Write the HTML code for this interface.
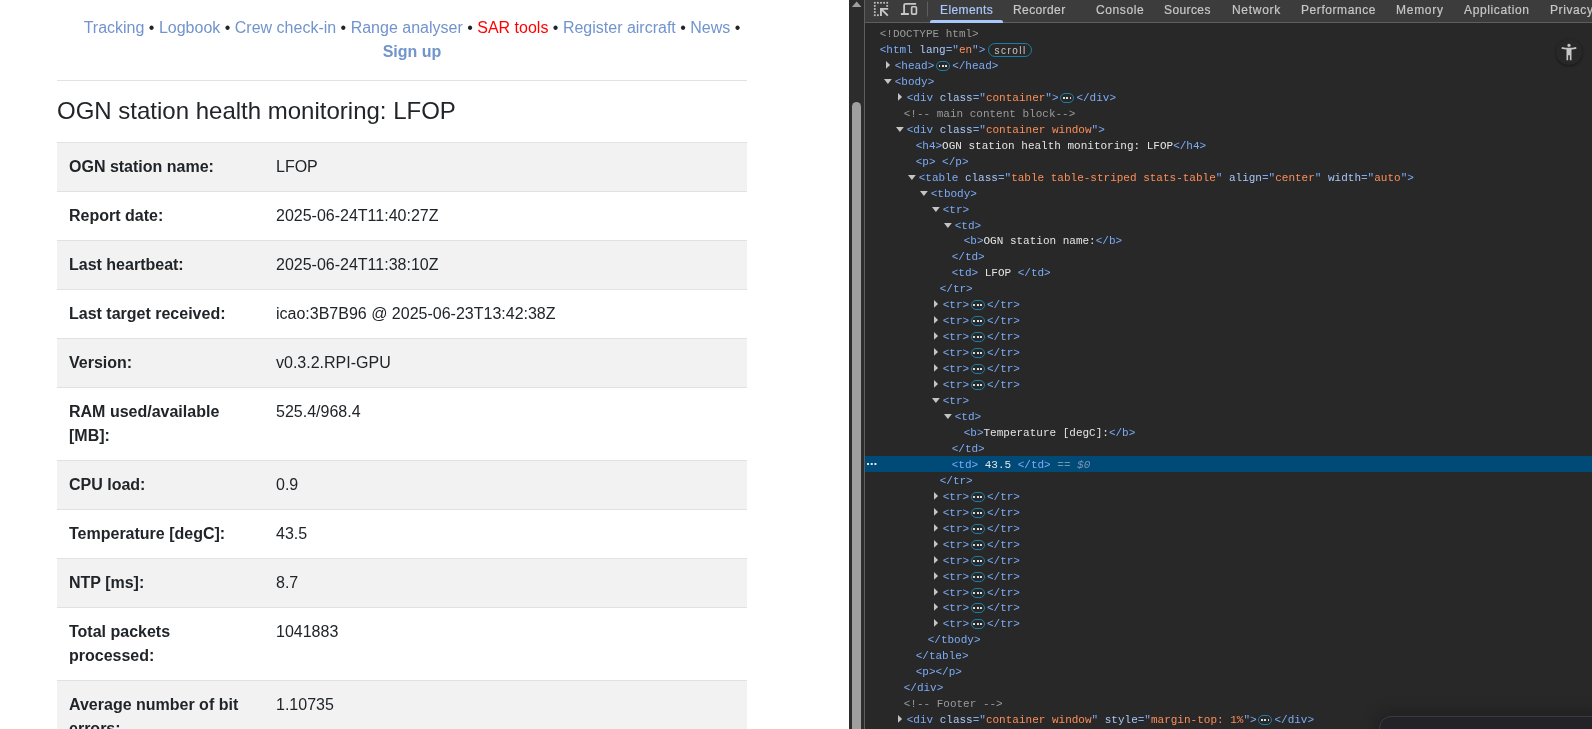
<!DOCTYPE html>
<html lang="en">
<head>
<meta charset="utf-8">
<title>OGN station health monitoring: LFOP</title>
<style>
*{box-sizing:border-box;}
html,body{margin:0;padding:0;overflow:hidden;}
body{width:1592px;height:729px;overflow:hidden;position:relative;background:#fff;font-family:"Liberation Sans",sans-serif;}
/* ---------- left page ---------- */
#page{will-change:transform;position:absolute;left:0;top:0;width:849px;height:729px;overflow:hidden;background:#fff;color:#212529;font-size:16px;line-height:24px;}
#nav{position:absolute;left:0;top:16px;width:824px;text-align:center;white-space:nowrap;color:#212529;}
#nav a{color:#7194cd;text-decoration:none;}
#nav a.sar{color:#ff0000;}
#nav a.su{font-weight:bold;}
#hr{position:absolute;left:57px;top:80px;width:690px;height:1px;background:#e2e2e2;}
#h4{position:absolute;left:57px;top:97px;margin:0;font-size:24px;line-height:28.8px;font-weight:normal;white-space:nowrap;color:#212529;}
#tbl{position:absolute;left:57px;top:142px;width:690px;border-collapse:collapse;table-layout:fixed;}
#tbl td{padding:12px;border-top:1px solid #dee2e6;vertical-align:top;line-height:24px;}
#tbl td:first-child{width:207px;}
#tbl tr:nth-child(odd) td{background:#f2f2f2;}
/* ---------- page scrollbar ---------- */
#sb{position:absolute;left:849px;top:0;width:15px;height:729px;background:#2c2c2c;overflow:hidden;}
#sb .up{position:absolute;left:0;top:0;}
#sb .thumb{position:absolute;left:3px;top:102px;width:9px;height:700px;border-radius:4.5px;background:#9f9f9f;}
/* ---------- devtools ---------- */
#dt{will-change:transform;position:absolute;left:864px;top:0;width:728px;height:729px;background:#282828;border-left:1px solid #5e5e5e;overflow:hidden;}
#tb{position:absolute;left:0;top:0;width:728px;height:23px;background:#3c3c3c;border-bottom:1px solid #5e5e5e;}
#tb span.t{position:absolute;top:3px;font-size:12px;line-height:15px;letter-spacing:.4px;color:#c7c7c7;white-space:nowrap;-webkit-text-stroke:.2px currentColor;}
#tb span.t.sel{color:#a8c7fa;}
#ul{position:absolute;left:65px;top:20px;width:73px;height:3px;background:#a8c7fa;border-radius:2px 2px 0 0;}
#tree{position:absolute;left:0;top:0;width:728px;font-family:"Liberation Mono",monospace;font-size:11px;color:#e3e3e3;}
#tree .l{position:absolute;left:0;width:728px;height:16px;line-height:16px;padding-top:1px;white-space:pre;}
.tg{color:#7cacf8;}
.at{color:#a8c7fa;}
.av{color:#fe8d59;}
.cm{color:#9a9a9a;}
.tx{color:#e3e3e3;}

#tree .l i{position:absolute;display:block;}
#tree .l.sel{background:#004a77;}
#tree .ar{position:absolute;top:3.5px;fill:#c4c4c4;}
#tree .ad{position:absolute;top:5.5px;fill:#c4c4c4;}
#tree .dots{left:2.3px;top:7px;width:2px;height:2px;background:#ece6e0;box-shadow:3.7px 0 0 #ece6e0,7.4px 0 0 #ece6e0;}
#tree .bd{display:inline-block;position:relative;vertical-align:top;width:14.2px;height:10px;margin:3px 2px 0 1.7px;border:1px solid #1a7fa6;border-radius:5px;}
#tree .bd i{top:3.2px;width:1.8px;height:1.7px;background:#e0e0e0;border-radius:.3px;}
#tree .bd i:nth-child(1){left:1.7px;}
#tree .bd i:nth-child(2){left:5px;}
#tree .bd i:nth-child(3){left:8.3px;}
#tree .sc{display:inline-block;vertical-align:top;width:44px;height:14px;margin:1px 0 0 2.5px;border:1px solid #1a7fa6;border-radius:7px;font-family:"Liberation Sans",sans-serif;font-size:10px;line-height:14px;letter-spacing:1.5px;text-align:center;color:#c8c8c8;padding-left:1.5px;}
.eq{color:#7494b4;font-style:italic;}
#ico{position:absolute;left:0;top:0;}
#acc{position:absolute;left:690.8px;top:38.5px;width:26px;height:26px;border-radius:13px;background:#282828;box-shadow:0 1px 3px rgba(0,0,0,.45);}
#acc svg{position:absolute;left:3px;top:3.6px;}
#pop{position:absolute;left:514px;top:716px;width:300px;height:60px;border:1px solid #3b3b42;border-radius:12px;background:#232327;box-shadow:0 0 16px 4px rgba(0,0,0,.22);}
</style>
</head>
<body>
<div id="page">
  <div id="nav"><a>Tracking</a> &bull; <a>Logbook</a> &bull; <a>Crew check-in</a> &bull; <a>Range analyser</a> &bull; <a class="sar">SAR tools</a> &bull; <a>Register aircraft</a> &bull; <a>News</a> &bull;<br><a class="su">Sign up</a></div>
  <div id="hr"></div>
  <h4 id="h4">OGN station health monitoring: LFOP</h4>
  <table id="tbl">
    <tr><td><b>OGN station name:</b></td><td>LFOP</td></tr>
    <tr><td><b>Report date:</b></td><td>2025-06-24T11:40:27Z</td></tr>
    <tr><td><b>Last heartbeat:</b></td><td>2025-06-24T11:38:10Z</td></tr>
    <tr><td><b>Last target received:</b></td><td>icao:3B7B96 @ 2025-06-23T13:42:38Z</td></tr>
    <tr><td><b>Version:</b></td><td>v0.3.2.RPI-GPU</td></tr>
    <tr><td><b>RAM used/available [MB]:</b></td><td>525.4/968.4</td></tr>
    <tr><td><b>CPU load:</b></td><td>0.9</td></tr>
    <tr><td><b>Temperature [degC]:</b></td><td>43.5</td></tr>
    <tr><td><b>NTP [ms]:</b></td><td>8.7</td></tr>
    <tr><td><b>Total packets processed:</b></td><td>1041883</td></tr>
    <tr><td><b>Average number of bit errors:</b></td><td>1.10735</td></tr>
    <tr><td><b>Positions received:</b></td><td>0</td></tr>
  </table>
</div>
<div id="sb"><svg class="up" width="15" height="10" viewBox="0 0 15 10"><path d="M2.9 7.1H12.4L7.65 1.6Z" fill="#9f9f9f"/></svg><div class="thumb"></div></div>
<div id="dt">
  <div id="tb">
    <span class="t sel" style="left:75px">Elements</span>
    <span class="t" style="left:148px">Recorder</span>
    <span class="t" style="left:231px;letter-spacing:.6px">Console</span>
    <span class="t" style="left:299px">Sources</span>
    <span class="t" style="left:367px;letter-spacing:.7px">Network</span>
    <span class="t" style="left:436px;letter-spacing:.57px">Performance</span>
    <span class="t" style="left:531px;letter-spacing:.73px">Memory</span>
    <span class="t" style="left:599px;letter-spacing:.63px">Application</span>
    <span class="t" style="left:685px;letter-spacing:.6px">Privacy</span>
    <div id="ul"></div>
    <svg id="ico" width="70" height="22" viewBox="0 0 70 22">
      <g fill="#c7c7c7" opacity=".92">
        <rect x="8.9" y="1.9" width="1.8" height="1.8"/><rect x="12" y="1.9" width="1.8" height="1.8"/><rect x="15.1" y="1.9" width="1.8" height="1.8"/><rect x="18.2" y="1.9" width="1.8" height="1.8"/><rect x="21.3" y="1.9" width="1.8" height="1.8"/>
        <rect x="8.9" y="5" width="1.8" height="1.8"/><rect x="8.9" y="8.1" width="1.8" height="1.8"/><rect x="8.9" y="11.2" width="1.8" height="1.8"/><rect x="8.9" y="14.3" width="1.8" height="1.8"/>
        <rect x="12" y="14.3" width="1.8" height="1.8"/>
        <rect x="21.3" y="5" width="1.8" height="1.8"/>
      </g>
      <g fill="#c7c7c7">
        <path d="M15 7.9H23.2V9.8H18.3L23.5 15L22.2 16.3L16.9 11.1V16.1H15Z"/>
        <rect x="35.9" y="13" width="8" height="2"/>
      </g>
      <path d="M51.1 3.85H40.6Q39.1 3.85 39.1 5.3V13.4" fill="none" stroke="#c7c7c7" stroke-width="1.8"/>
      <rect x="46.65" y="6.75" width="4.75" height="7.4" rx=".9" fill="none" stroke="#c7c7c7" stroke-width="1.7"/>
      <rect x="62" y="1.5" width="1" height="15" fill="#5e5e5e"/>
    </svg>

  </div>
  <div id="tree">
<div class="l" style="top:25px;padding-left:14.7px"><span class="cm">&lt;!DOCTYPE html&gt;</span></div>
<div class="l" style="top:41px;padding-left:14.7px"><span class="tg">&lt;html </span><span class="at">lang</span><span class="tg">="</span><span class="av">en</span><span class="tg">"&gt;</span><span class="sc">scroll</span></div>
<div class="l" style="top:57px;padding-left:29.7px"><svg class="ar" style="left:20.9px" width="5" height="8" viewBox="0 0 5 8"><path d="M0 0L4.1 3.9L0 7.8Z"/></svg><span class="tg">&lt;head&gt;</span><span class="bd"><i></i><i></i><i></i></span><span class="tg">&lt;/head&gt;</span></div>
<div class="l" style="top:73px;padding-left:29.7px"><svg class="ad" style="left:19.1px" width="8" height="5" viewBox="0 0 8 5"><path d="M0 0H7.8L3.9 4.9Z"/></svg><span class="tg">&lt;body&gt;</span></div>
<div class="l" style="top:89px;padding-left:41.7px"><svg class="ar" style="left:32.9px" width="5" height="8" viewBox="0 0 5 8"><path d="M0 0L4.1 3.9L0 7.8Z"/></svg><span class="tg">&lt;div </span><span class="at">class</span><span class="tg">="</span><span class="av">container</span><span class="tg">"&gt;</span><span class="bd"><i></i><i></i><i></i></span><span class="tg">&lt;/div&gt;</span></div>
<div class="l" style="top:105px;padding-left:38.7px"><span class="cm">&lt;!-- main content block--&gt;</span></div>
<div class="l" style="top:121px;padding-left:41.7px"><svg class="ad" style="left:31.1px" width="8" height="5" viewBox="0 0 8 5"><path d="M0 0H7.8L3.9 4.9Z"/></svg><span class="tg">&lt;div </span><span class="at">class</span><span class="tg">="</span><span class="av">container window</span><span class="tg">"&gt;</span></div>
<div class="l" style="top:137px;padding-left:50.7px"><span class="tg">&lt;h4&gt;</span><span class="tx">OGN station health monitoring: LFOP</span><span class="tg">&lt;/h4&gt;</span></div>
<div class="l" style="top:153px;padding-left:50.7px"><span class="tg">&lt;p&gt;</span><span class="tx"> </span><span class="tg">&lt;/p&gt;</span></div>
<div class="l" style="top:169px;padding-left:53.7px"><svg class="ad" style="left:43.1px" width="8" height="5" viewBox="0 0 8 5"><path d="M0 0H7.8L3.9 4.9Z"/></svg><span class="tg">&lt;table </span><span class="at">class</span><span class="tg">="</span><span class="av">table table-striped stats-table</span><span class="tg">" </span><span class="at">align</span><span class="tg">="</span><span class="av">center</span><span class="tg">" </span><span class="at">width</span><span class="tg">="</span><span class="av">auto</span><span class="tg">"&gt;</span></div>
<div class="l" style="top:185px;padding-left:65.7px"><svg class="ad" style="left:55.1px" width="8" height="5" viewBox="0 0 8 5"><path d="M0 0H7.8L3.9 4.9Z"/></svg><span class="tg">&lt;tbody&gt;</span></div>
<div class="l" style="top:201px;padding-left:77.7px"><svg class="ad" style="left:67.1px" width="8" height="5" viewBox="0 0 8 5"><path d="M0 0H7.8L3.9 4.9Z"/></svg><span class="tg">&lt;tr&gt;</span></div>
<div class="l" style="top:217px;padding-left:89.7px"><svg class="ad" style="left:79.1px" width="8" height="5" viewBox="0 0 8 5"><path d="M0 0H7.8L3.9 4.9Z"/></svg><span class="tg">&lt;td&gt;</span></div>
<div class="l" style="top:232px;padding-left:98.7px"><span class="tg">&lt;b&gt;</span><span class="tx">OGN station name:</span><span class="tg">&lt;/b&gt;</span></div>
<div class="l" style="top:248px;padding-left:86.7px"><span class="tg">&lt;/td&gt;</span></div>
<div class="l" style="top:264px;padding-left:86.7px"><span class="tg">&lt;td&gt;</span><span class="tx"> LFOP </span><span class="tg">&lt;/td&gt;</span></div>
<div class="l" style="top:280px;padding-left:74.7px"><span class="tg">&lt;/tr&gt;</span></div>
<div class="l" style="top:296px;padding-left:77.7px"><svg class="ar" style="left:68.9px" width="5" height="8" viewBox="0 0 5 8"><path d="M0 0L4.1 3.9L0 7.8Z"/></svg><span class="tg">&lt;tr&gt;</span><span class="bd"><i></i><i></i><i></i></span><span class="tg">&lt;/tr&gt;</span></div>
<div class="l" style="top:312px;padding-left:77.7px"><svg class="ar" style="left:68.9px" width="5" height="8" viewBox="0 0 5 8"><path d="M0 0L4.1 3.9L0 7.8Z"/></svg><span class="tg">&lt;tr&gt;</span><span class="bd"><i></i><i></i><i></i></span><span class="tg">&lt;/tr&gt;</span></div>
<div class="l" style="top:328px;padding-left:77.7px"><svg class="ar" style="left:68.9px" width="5" height="8" viewBox="0 0 5 8"><path d="M0 0L4.1 3.9L0 7.8Z"/></svg><span class="tg">&lt;tr&gt;</span><span class="bd"><i></i><i></i><i></i></span><span class="tg">&lt;/tr&gt;</span></div>
<div class="l" style="top:344px;padding-left:77.7px"><svg class="ar" style="left:68.9px" width="5" height="8" viewBox="0 0 5 8"><path d="M0 0L4.1 3.9L0 7.8Z"/></svg><span class="tg">&lt;tr&gt;</span><span class="bd"><i></i><i></i><i></i></span><span class="tg">&lt;/tr&gt;</span></div>
<div class="l" style="top:360px;padding-left:77.7px"><svg class="ar" style="left:68.9px" width="5" height="8" viewBox="0 0 5 8"><path d="M0 0L4.1 3.9L0 7.8Z"/></svg><span class="tg">&lt;tr&gt;</span><span class="bd"><i></i><i></i><i></i></span><span class="tg">&lt;/tr&gt;</span></div>
<div class="l" style="top:376px;padding-left:77.7px"><svg class="ar" style="left:68.9px" width="5" height="8" viewBox="0 0 5 8"><path d="M0 0L4.1 3.9L0 7.8Z"/></svg><span class="tg">&lt;tr&gt;</span><span class="bd"><i></i><i></i><i></i></span><span class="tg">&lt;/tr&gt;</span></div>
<div class="l" style="top:392px;padding-left:77.7px"><svg class="ad" style="left:67.1px" width="8" height="5" viewBox="0 0 8 5"><path d="M0 0H7.8L3.9 4.9Z"/></svg><span class="tg">&lt;tr&gt;</span></div>
<div class="l" style="top:408px;padding-left:89.7px"><svg class="ad" style="left:79.1px" width="8" height="5" viewBox="0 0 8 5"><path d="M0 0H7.8L3.9 4.9Z"/></svg><span class="tg">&lt;td&gt;</span></div>
<div class="l" style="top:424px;padding-left:98.7px"><span class="tg">&lt;b&gt;</span><span class="tx">Temperature [degC]:</span><span class="tg">&lt;/b&gt;</span></div>
<div class="l" style="top:440px;padding-left:86.7px"><span class="tg">&lt;/td&gt;</span></div>
<div class="l sel" style="top:456px;padding-left:86.7px"><i class="dots"></i><span class="tg">&lt;td&gt;</span><span class="tx"> 43.5 </span><span class="tg">&lt;/td&gt;</span><span class="eq"> == $0</span></div>
<div class="l" style="top:472px;padding-left:74.7px"><span class="tg">&lt;/tr&gt;</span></div>
<div class="l" style="top:488px;padding-left:77.7px"><svg class="ar" style="left:68.9px" width="5" height="8" viewBox="0 0 5 8"><path d="M0 0L4.1 3.9L0 7.8Z"/></svg><span class="tg">&lt;tr&gt;</span><span class="bd"><i></i><i></i><i></i></span><span class="tg">&lt;/tr&gt;</span></div>
<div class="l" style="top:504px;padding-left:77.7px"><svg class="ar" style="left:68.9px" width="5" height="8" viewBox="0 0 5 8"><path d="M0 0L4.1 3.9L0 7.8Z"/></svg><span class="tg">&lt;tr&gt;</span><span class="bd"><i></i><i></i><i></i></span><span class="tg">&lt;/tr&gt;</span></div>
<div class="l" style="top:520px;padding-left:77.7px"><svg class="ar" style="left:68.9px" width="5" height="8" viewBox="0 0 5 8"><path d="M0 0L4.1 3.9L0 7.8Z"/></svg><span class="tg">&lt;tr&gt;</span><span class="bd"><i></i><i></i><i></i></span><span class="tg">&lt;/tr&gt;</span></div>
<div class="l" style="top:536px;padding-left:77.7px"><svg class="ar" style="left:68.9px" width="5" height="8" viewBox="0 0 5 8"><path d="M0 0L4.1 3.9L0 7.8Z"/></svg><span class="tg">&lt;tr&gt;</span><span class="bd"><i></i><i></i><i></i></span><span class="tg">&lt;/tr&gt;</span></div>
<div class="l" style="top:552px;padding-left:77.7px"><svg class="ar" style="left:68.9px" width="5" height="8" viewBox="0 0 5 8"><path d="M0 0L4.1 3.9L0 7.8Z"/></svg><span class="tg">&lt;tr&gt;</span><span class="bd"><i></i><i></i><i></i></span><span class="tg">&lt;/tr&gt;</span></div>
<div class="l" style="top:568px;padding-left:77.7px"><svg class="ar" style="left:68.9px" width="5" height="8" viewBox="0 0 5 8"><path d="M0 0L4.1 3.9L0 7.8Z"/></svg><span class="tg">&lt;tr&gt;</span><span class="bd"><i></i><i></i><i></i></span><span class="tg">&lt;/tr&gt;</span></div>
<div class="l" style="top:584px;padding-left:77.7px"><svg class="ar" style="left:68.9px" width="5" height="8" viewBox="0 0 5 8"><path d="M0 0L4.1 3.9L0 7.8Z"/></svg><span class="tg">&lt;tr&gt;</span><span class="bd"><i></i><i></i><i></i></span><span class="tg">&lt;/tr&gt;</span></div>
<div class="l" style="top:599px;padding-left:77.7px"><svg class="ar" style="left:68.9px" width="5" height="8" viewBox="0 0 5 8"><path d="M0 0L4.1 3.9L0 7.8Z"/></svg><span class="tg">&lt;tr&gt;</span><span class="bd"><i></i><i></i><i></i></span><span class="tg">&lt;/tr&gt;</span></div>
<div class="l" style="top:615px;padding-left:77.7px"><svg class="ar" style="left:68.9px" width="5" height="8" viewBox="0 0 5 8"><path d="M0 0L4.1 3.9L0 7.8Z"/></svg><span class="tg">&lt;tr&gt;</span><span class="bd"><i></i><i></i><i></i></span><span class="tg">&lt;/tr&gt;</span></div>
<div class="l" style="top:631px;padding-left:62.7px"><span class="tg">&lt;/tbody&gt;</span></div>
<div class="l" style="top:647px;padding-left:50.7px"><span class="tg">&lt;/table&gt;</span></div>
<div class="l" style="top:663px;padding-left:50.7px"><span class="tg">&lt;p&gt;&lt;/p&gt;</span></div>
<div class="l" style="top:679px;padding-left:38.7px"><span class="tg">&lt;/div&gt;</span></div>
<div class="l" style="top:695px;padding-left:38.7px"><span class="cm">&lt;!-- Footer --&gt;</span></div>
<div class="l" style="top:711px;padding-left:41.7px"><svg class="ar" style="left:32.9px" width="5" height="8" viewBox="0 0 5 8"><path d="M0 0L4.1 3.9L0 7.8Z"/></svg><span class="tg">&lt;div </span><span class="at">class</span><span class="tg">="</span><span class="av">container window</span><span class="tg">" </span><span class="at">style</span><span class="tg">="</span><span class="av">margin-top: 1%</span><span class="tg">"&gt;</span><span class="bd"><i></i><i></i><i></i></span><span class="tg">&lt;/div&gt;</span></div>
</div>
  <div id="acc"><svg width="20" height="20" viewBox="0 0 24 24"><path fill="#c7c7c7" d="M20.5 6c-2.61.7-5.67 1-8.5 1s-5.89-.3-8.5-1L3 8c1.86.5 4 .83 6 1v13h2v-6h2v6h2V9c2-.17 4.14-.5 6-1l-.5-2zM12 6c1.1 0 2-.9 2-2s-.9-2-2-2-2 .9-2 2 .9 2 2 2z"/></svg></div>
  <div id="pop"></div>
</div>
</body>
</html>
